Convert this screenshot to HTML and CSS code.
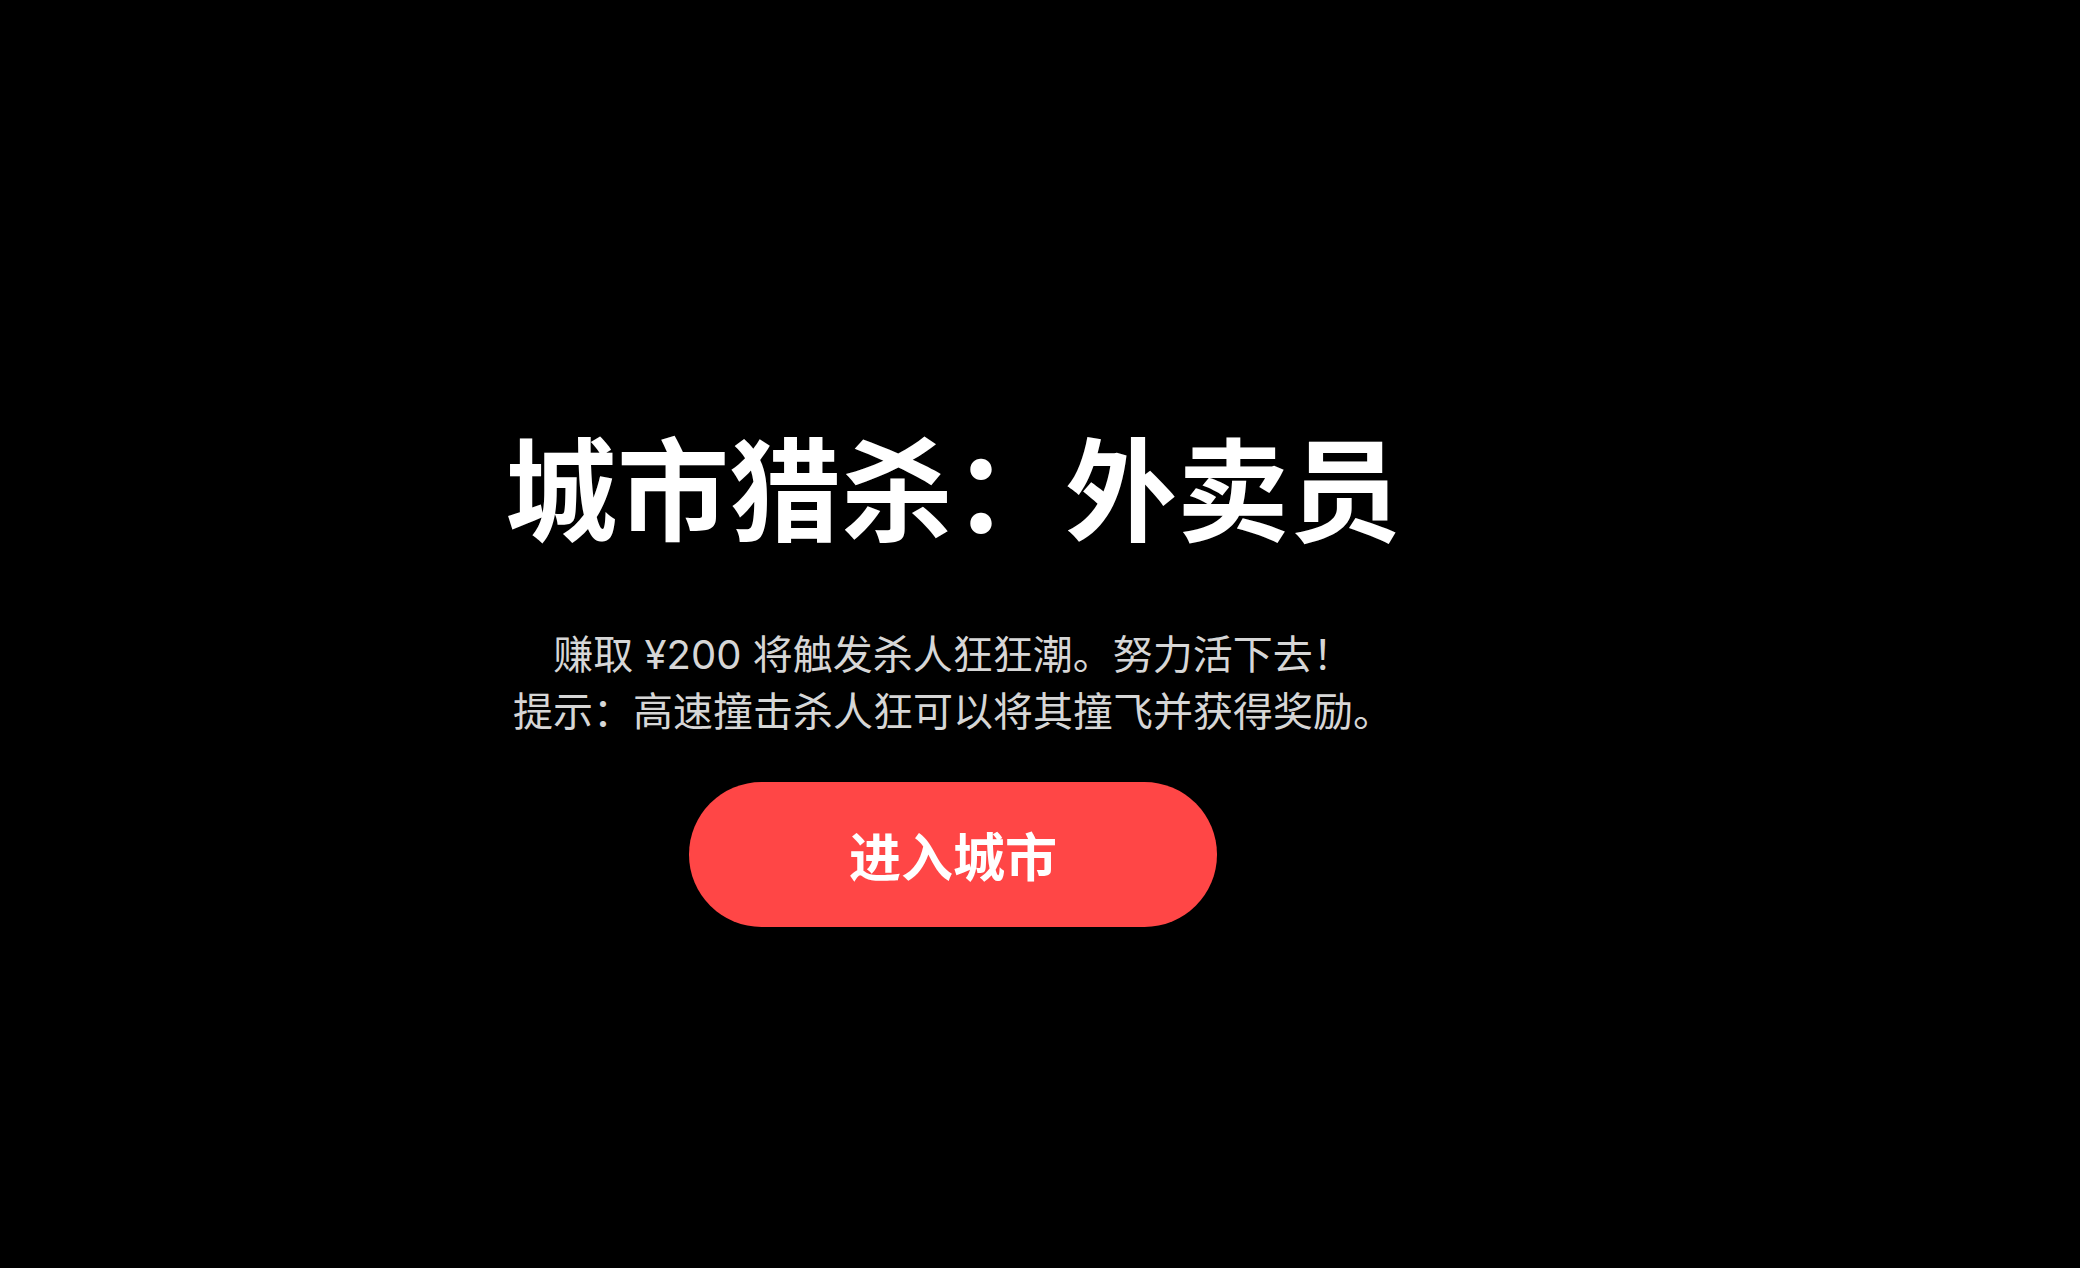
FILE: index.html
```html
<!DOCTYPE html>
<html lang="zh-CN">
<head>
<meta charset="utf-8">
<title>城市猎杀：外卖员</title>
<link rel="stylesheet" href="styles.css">
</head>
<body>
<main class="screen">
  <section class="intro">
    <h1 class="title">城市猎杀：外卖员</h1>
    <p class="desc">赚取 ¥200 将触发杀人狂狂潮。努力活下去！<br>提示：高速撞击杀人狂可以将其撞飞并获得奖励。</p>
    <button class="start">进入城市</button>
  </section>
</main>
</body>
</html>
```

FILE: styles.css
```css
html, body {
  margin: 0;
  padding: 0;
  background: #000;
}
body {
  font-family: "Noto Sans CJK SC", "Noto Sans", sans-serif;
}
.screen {
  width: 2080px;
  height: 1268px;
  box-sizing: border-box;
  padding-right: 174px;
  padding-top: 86px;
  display: flex;
  align-items: center;
  justify-content: center;
}
.intro {
  display: flex;
  flex-direction: column;
  align-items: center;
  text-align: center;
}
.title {
  margin: 0;
  font-size: 112px;
  font-weight: 700;
  line-height: 1;
  color: #fff;
}
.desc {
  margin: 86px 0 0;
  font-family: "Inter", "Noto Sans CJK SC", sans-serif;
  font-size: 40px;
  line-height: 57px;
  color: #d6d6d6;
}
.start {
  margin-top: 42px;
  width: 528px;
  height: 145px;
  border: none;
  border-radius: 73px;
  background: #ff4646;
  color: #fff;
  font-family: inherit;
  font-size: 52px;
  font-weight: 700;
  cursor: pointer;
}
```
